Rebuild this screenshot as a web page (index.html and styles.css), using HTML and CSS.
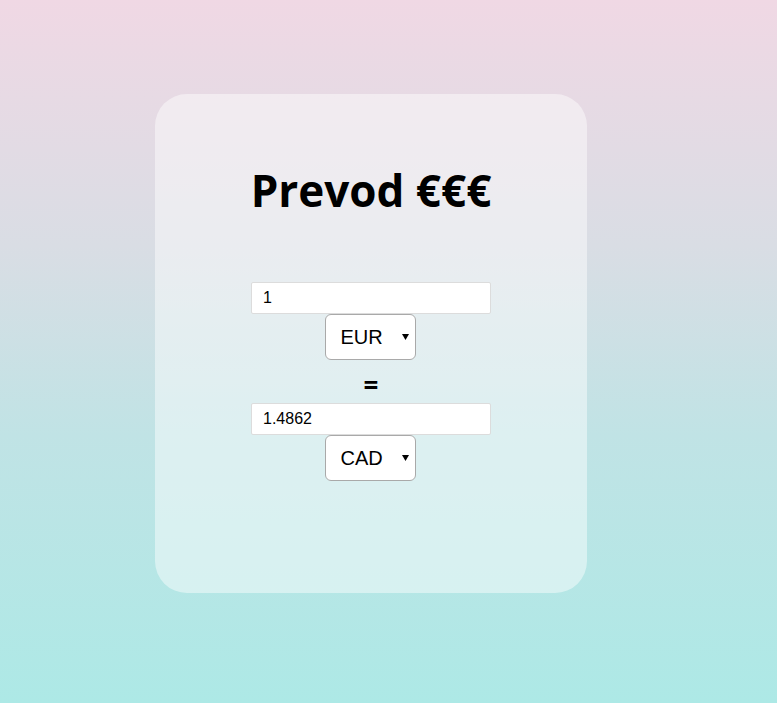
FILE: index.html
```html
<!DOCTYPE html>
<html>
<head>
<meta charset="utf-8">
<link rel="stylesheet" href="styles.css">
</head>
<body>
<div class="card">
  <h1 class="title">Prevod €€€</h1>
  <div class="form">
    <input class="amount" type="text" value="1">
    <select class="currency"><option>EUR</option></select>
    <div class="equals">=</div>
    <input class="amount" type="text" value="1.4862">
    <select class="currency"><option>CAD</option></select>
  </div>
</div>
</body>
</html>
```
FILE: styles.css
```css
html, body { height: 100%; }
body {
  margin: 0;
  background: linear-gradient(#f0d8e4 0%, #d9dde4 35%, #c0e3e5 62%, #ade9e6 100%);
  font-family: "Liberation Sans", Arial, sans-serif;
  overflow: hidden;
}
.card {
  box-sizing: border-box;
  width: 432px;
  height: 499px;
  margin: 94px 0 0 155px;
  border-radius: 32px;
  background: rgba(255, 255, 255, 0.46);
  padding-top: 67px;
  display: flex;
  flex-direction: column;
  align-items: center;
}
.title {
  margin: 0;
  font-family: "Open Sans", "Noto Sans", sans-serif;
  font-weight: 700;
  font-size: 44px;
  line-height: 58px;
  color: #000;
}
.form {
  margin-top: 63px;
  display: flex;
  flex-direction: column;
  align-items: center;
}
.amount {
  box-sizing: border-box;
  width: 240px;
  height: 32px;
  border: 1px solid #dcdcdc;
  border-radius: 2px;
  background: #fff;
  padding: 0 11px;
  font-family: "Liberation Sans", Arial, sans-serif;
  font-size: 16px;
  color: #000;
  outline: none;
}
.currency {
  box-sizing: border-box;
  width: 91px;
  height: 46px;
  margin-right: 2px;
  border: 1px solid #a9a9a9;
  border-radius: 6px;
  background: #fff url("data:image/svg+xml;utf8,<svg xmlns='http://www.w3.org/2000/svg' width='7' height='6'><path d='M0 0H7L3.5 6Z' fill='black'/></svg>") no-repeat right 6px center;
  appearance: none;
  -webkit-appearance: none;
  padding: 0 0 0 15px;
  font-family: "Liberation Sans", Arial, sans-serif;
  font-size: 20px;
  color: #000;
}
.equals {
  box-sizing: border-box;
  height: 43px;
  padding-top: 8px;
  font-family: "Open Sans", sans-serif;
  font-weight: 700;
  font-size: 26px;
  line-height: 35px;
}
```
